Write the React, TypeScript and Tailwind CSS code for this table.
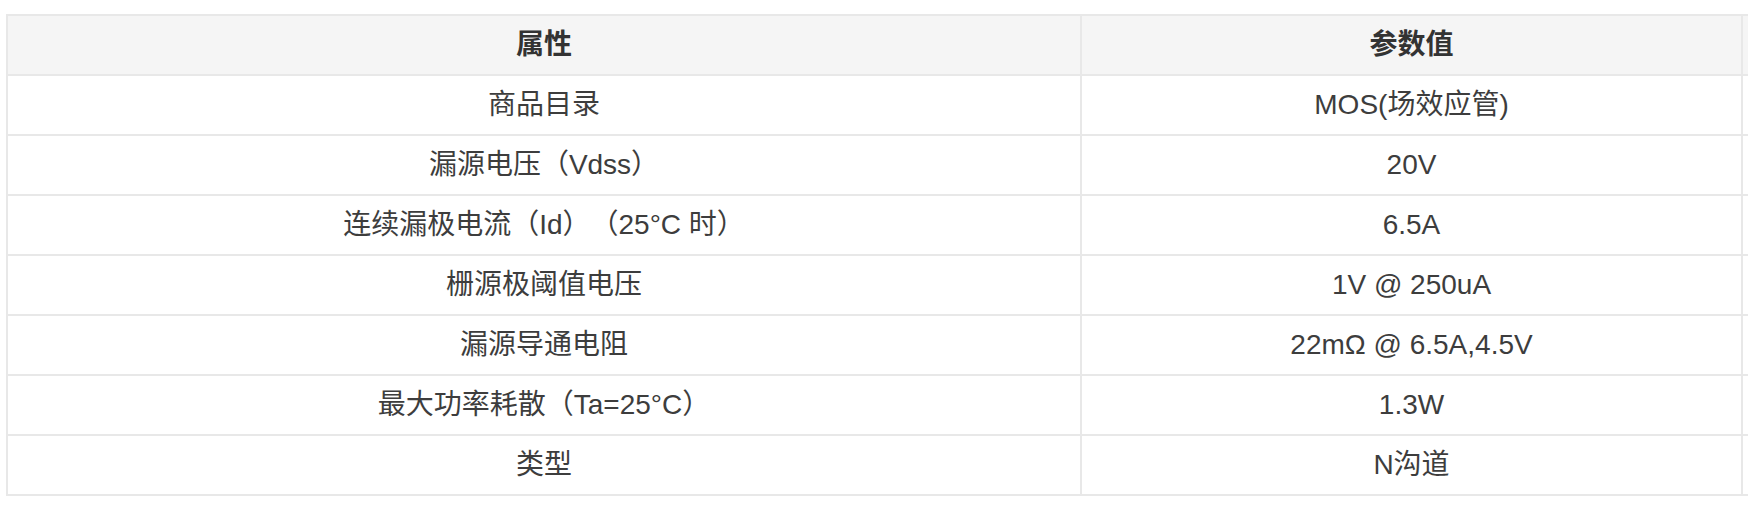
const rows: [string, string][] = [
  ['商品目录', 'MOS(场效应管)'],
  ['漏源电压（Vdss）', '20V'],
  ['连续漏极电流（Id）（25°C 时）', '6.5A'],
  ['栅源极阈值电压', '1V @ 250uA'],
  ['漏源导通电阻', '22mΩ @ 6.5A,4.5V'],
  ['最大功率耗散（Ta=25°C）', '1.3W'],
  ['类型', 'N沟道'],
]

function Cell({ children, head }: { children?: React.ReactNode; head?: boolean }) {
  return (
    <div
      className={`h-[60px] flex items-center justify-center border-r-2 border-b-2 border-[#e8e8e8] whitespace-nowrap [text-spacing-trim:space-all] ${
        head ? 'bg-[#f5f5f5] font-bold text-[#333]' : 'bg-white text-[#3d3d3d]'
      }`}
    >
      {children}
    </div>
  )
}

export default function App() {
  return (
    <div
      className="w-[1748px] h-[508px] overflow-hidden bg-white pt-[14px] pl-[6px] text-[28px]"
      style={{ fontFamily: '"Liberation Sans", "Noto Sans CJK SC", sans-serif' }}
    >
      <div className="grid grid-cols-[1074px_661px_320px] w-max border-l-2 border-t-2 border-[#e8e8e8]">
        <Cell head>属性</Cell>
        <Cell head>参数值</Cell>
        <Cell head />
        {rows.map(([k, v]) => (
          <>
            <Cell key={k}>{k}</Cell>
            <Cell key={k + 'v'}>{v}</Cell>
            <Cell key={k + 'x'} />
          </>
        ))}
      </div>
    </div>
  )
}
